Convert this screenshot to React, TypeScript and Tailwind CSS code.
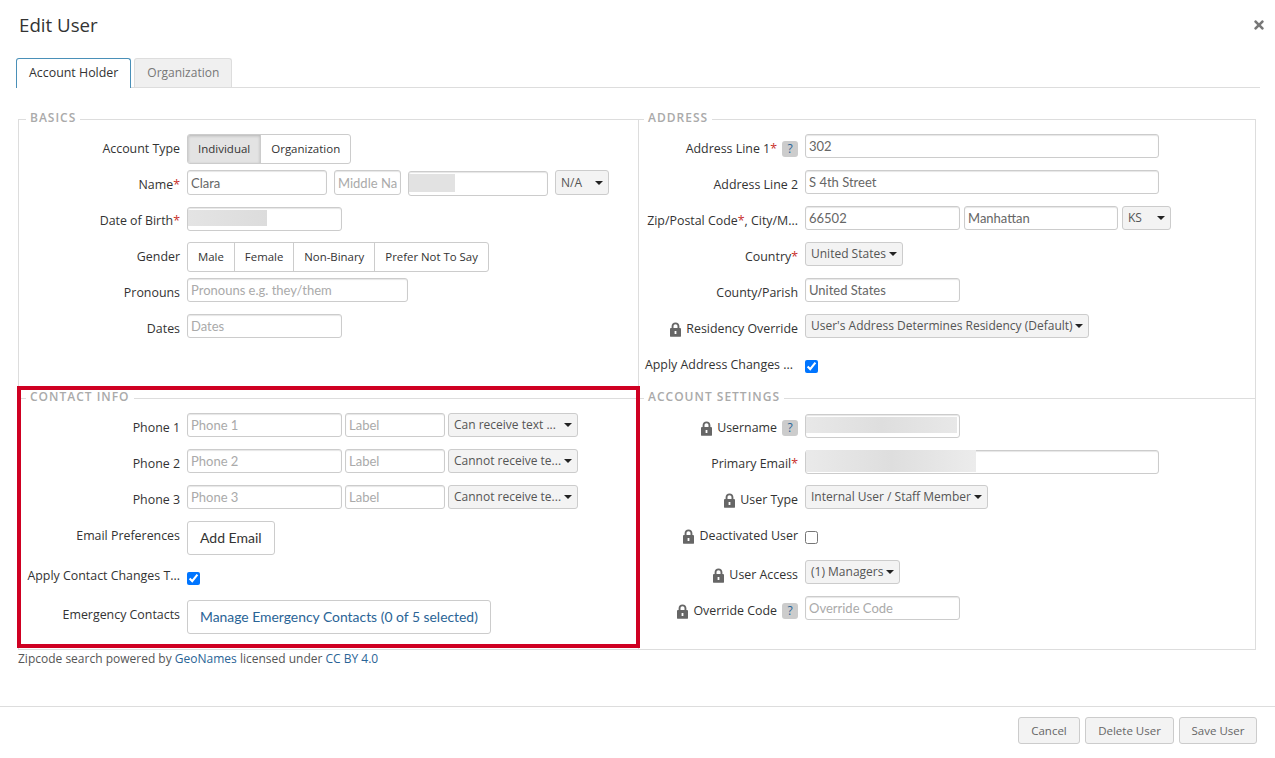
import { ReactNode } from 'react';
import { FaTimes } from 'react-icons/fa';

const inputBase = "h-6 rounded-[3px] border border-[#ccc] bg-white px-[3px] font-['Lato',sans-serif] text-[13px] text-[#666] placeholder:text-[#aaa] shadow-[inset_0_1px_1px_rgba(0,0,0,0.1)] outline-none";
const selectBase = "flex items-center h-6 rounded-[3px] border border-[#ccc] bg-[#f3f3f3] text-xs text-[#555] whitespace-nowrap";

const Caret = () => (
  <svg width="8" height="4" viewBox="0 0 8 4" className="shrink-0">
    <path d="M0 0h8L4 4z" fill="#222" />
  </svg>
);

const Lock = () => (
  <svg width="11" height="15" viewBox="0 0 11 15" className="shrink-0">
    <path
      fillRule="evenodd"
      fill="#666"
      d="M1.6 6V4.2C1.6 1.9 3.2.4 5.500.4s3.900 1.500 3.900 3.800V6h.7c.5 0 .9.4.9.9v7c0 .5-.4.9-.9.9H.9c-.5 0-.9-.4-.9-.9v-7C0 6.400.4 6 .9 6h.7zm1.900 0h4V4.300C7.500 3.100 6.700 2.300 5.500 2.300s-2 .8-2 2V6zM4.600 9v3h1.800V9H4.600z"
    />
  </svg>
);

const Help = () => (
  <span className="inline-flex h-4 w-4 items-center justify-center rounded-[3px] bg-[#ccc] text-xs text-[#2a6496]">?</span>
);

const Req = () => <span className="text-[#c9302c]">*</span>;

const Row = ({ label, children, className = "", right }: { label: ReactNode; children: ReactNode; className?: string; right?: boolean }) => (
  <div className={`flex items-start min-h-9 ${className}`}>
    <div className={`flex shrink-0 items-center justify-end gap-[5px] h-[30px] text-[12.4px] text-[#333] whitespace-nowrap ${right ? 'w-[159px]' : 'w-[161px]'}`}>
      {label}
    </div>
    <div className="ml-[7px] flex items-start gap-[3px]">{children}</div>
  </div>
);

const Seg = ({ items, active, text = "text-[11.5px]" }: { items: string[]; active?: string; text?: string }) => (
  <div className="flex h-[30px] rounded-[3px] border border-[#ccc] bg-white overflow-hidden">
    {items.map((item, i) => (
      <span
        key={item}
        className={`flex items-center px-[10px] text-[#333] ${text} ${i > 0 ? 'border-l border-[#ccc]' : ''} ${item === active ? 'bg-[#e3e3e3] shadow-[inset_0_1px_3px_rgba(0,0,0,0.2)]' : ''}`}
      >
        {item}
      </span>
    ))}
  </div>
);

const Select = ({ value, width }: { value: string; width: string }) => (
  <div className={`${selectBase} ${width} justify-between px-[5px]`}>
    <span>{value}</span>
    <Caret />
  </div>
);

const Blur = ({ className }: { className: string }) => <div className={`absolute ${className}`} />;

const Legend = ({ children, className }: { children: ReactNode; className: string }) => (
  <legend className={`px-1 h-5 text-xs font-semibold uppercase tracking-[1px] leading-[18px] text-[#aaa] ${className}`}>{children}</legend>
);

const Check = ({ checked, className = "mt-[10px]" }: { checked?: boolean; className?: string }) => (
  <input
    type="checkbox"
    defaultChecked={checked}
    className={`h-[13px] w-[13px] accent-[#0075ff] ${className}`}
  />
);

export default function App() {
  return (
    <div className="relative h-[758px] w-full overflow-hidden bg-white font-['Open_Sans',sans-serif]">
      <div className="flex items-center justify-between h-[50px] pl-[19px] pr-[9px]">
        <h1 className="text-[18.7px] text-[#333]">Edit User</h1>
        <FaTimes className="text-[#777] text-sm" />
      </div>

      <div className="mx-4 mt-2 mr-[15px] flex gap-[3px] h-[30px] border-b border-[#ddd]">
        <div className="h-[30px] flex items-center px-3 rounded-t-[3px] border border-b-0 border-[#4a90b8] bg-white text-[12.4px] text-[#333]">Account Holder</div>
        <div className="h-[29px] flex items-center px-3 rounded-t-[3px] border border-b-0 border-[#ddd] bg-[#f0f0f0] text-xs text-[#777]">Organization</div>
      </div>

      <div className="relative ml-[18px] mr-[19px] mt-[21px]">
        <div className="grid grid-cols-[620px_1fr] border-b border-[#ddd]">
          <fieldset className="border-t border-l border-[#ddd] px-0 pt-[5px] h-[279px]">
            <Legend className="ml-[7px]">Basics</Legend>
            <Row label="Account Type">
              <Seg items={["Individual", "Organization"]} active="Individual" />
            </Row>
            <Row label={<span>Name<Req /></span>}>
              <input className={`${inputBase} w-[140px] h-[25px]`} defaultValue="Clara" />
              <input className={`${inputBase} w-[67px] h-[25px] ml-[4px]`} placeholder="Middle Na" />
              <div className="relative ml-[4px]">
                <input className={`${inputBase} w-[140px] h-[25px]`} />
                <Blur className="left-[1px] top-[4px] h-[18px] w-[46px] bg-[#e2e2e2]" />
              </div>
              <Select value="N/A" width="w-[54px] h-[25px] ml-[4px]" />
            </Row>
            <Row label={<span>Date of Birth<Req /></span>}>
              <div className="relative">
                <input className={`${inputBase} w-[155px]`} />
                <Blur className="left-[1px] top-[4px] h-4 w-[79px] bg-gradient-to-r from-[#e4e4e4] to-[#dcdcdc]" />
              </div>
            </Row>
            <Row label="Gender">
              <Seg items={["Male", "Female", "Non-Binary", "Prefer Not To Say"]} text="text-[11.4px]" />
            </Row>
            <Row label="Pronouns">
              <input className={`${inputBase} w-[221px]`} placeholder="Pronouns e.g. they/them" />
            </Row>
            <Row label="Dates">
              <input className={`${inputBase} w-[155px]`} placeholder="Dates" />
            </Row>
          </fieldset>

          {/* runs 10px under the next section so the outer line stays unbroken past its legend */}
          <fieldset className="border-t border-l border-r border-[#ddd] px-0 pt-[5px] h-[289px] -mb-[10px]">
            <Legend className="ml-[5px]">Address</Legend>
            <Row right label={<><span>Address Line 1<Req /></span><Help /></>}>
              <input className={`${inputBase} w-[354px]`} defaultValue="302" />
            </Row>
            <Row right label="Address Line 2">
              <input className={`${inputBase} w-[354px]`} defaultValue="S 4th Street" />
            </Row>
            <Row right label={<span>Zip/Postal Code<Req />, City/M...</span>}>
              <input className={`${inputBase} w-[155px]`} defaultValue="66502" />
              <input className={`${inputBase} w-[154px] ml-[1px]`} defaultValue="Manhattan" />
              <Select value="KS" width="w-[49px] ml-[1px]" />
            </Row>
            <Row right label={<span>Country<Req /></span>}>
              <Select value="United States" width="w-[98px]" />
            </Row>
            <Row right label="County/Parish">
              <input className={`${inputBase} w-[155px]`} defaultValue="United States" />
            </Row>
            <Row right label={<><Lock /><span>Residency Override</span></>}>
              <Select value="User's Address Determines Residency (Default)" width="w-[284px]" />
            </Row>
            <Row right label={<span className="mr-[5px]">Apply Address Changes ...</span>}>
              <Check checked />
            </Row>
          </fieldset>

          <fieldset className="border-t border-l border-[#ddd] px-0 pt-[5px] h-[261px]">
            <Legend className="ml-[7px]">Contact Info</Legend>
            <Row label="Phone 1">
              <input className={`${inputBase} w-[155px]`} placeholder="Phone 1" />
              <input className={`${inputBase} w-[100px]`} placeholder="Label" />
              <Select value="Can receive text ..." width="w-[130px]" />
            </Row>
            <Row label="Phone 2">
              <input className={`${inputBase} w-[155px]`} placeholder="Phone 2" />
              <input className={`${inputBase} w-[100px]`} placeholder="Label" />
              <Select value="Cannot receive te..." width="w-[130px]" />
            </Row>
            <Row label="Phone 3">
              <input className={`${inputBase} w-[155px]`} placeholder="Phone 3" />
              <input className={`${inputBase} w-[100px]`} placeholder="Label" />
              <Select value="Cannot receive te..." width="w-[130px]" />
            </Row>
            <Row label="Email Preferences" className="min-h-[40px]">
              <button className="h-[34px] rounded-[3px] border border-[#ccc] bg-white px-3 font-['Lato',sans-serif] text-sm text-[#333]">Add Email</button>
            </Row>
            <Row label="Apply Contact Changes T..." className="min-h-[39px]">
              <Check checked className="mt-[11px]" />
            </Row>
            <Row label="Emergency Contacts">
              <button className="h-[34px] rounded-[3px] border border-[#ccc] bg-white px-3 font-['Lato',sans-serif] text-[13.9px] text-[#2a6496]">Manage Emergency Contacts (0 of 5 selected)</button>
            </Row>
          </fieldset>

          <fieldset className="border-t border-l border-r border-[#ddd] px-0 pt-[5px] h-[261px]">
            <Legend className="ml-[5px]">Account Settings</Legend>
            <Row right label={<><Lock /><span>Username</span><Help /></>}>
              <div className="relative">
                <input className={`${inputBase} w-[155px]`} />
                <Blur className="left-[1px] top-[4px] h-4 w-[151px] bg-gradient-to-r from-[#e8e8e8] via-[#dedede] to-[#e8e8e8]" />
              </div>
            </Row>
            <Row right label={<span>Primary Email<Req /></span>}>
              <div className="relative">
                <input className={`${inputBase} w-[354px]`} />
                <Blur className="left-[1px] top-[1px] h-[22px] w-[170px] bg-gradient-to-r from-[#eaeaea] via-[#dedede] to-[#ececec]" />
              </div>
            </Row>
            <Row right label={<><Lock /><span>User Type</span></>}>
              <Select value="Internal User / Staff Member" width="w-[183px]" />
            </Row>
            <Row right label={<><Lock /><span>Deactivated User</span></>} className="min-h-[39px]">
              <Check />
            </Row>
            <Row right label={<><Lock /><span>User Access</span></>}>
              <Select value="(1) Managers" width="w-[95px]" />
            </Row>
            <Row right label={<><Lock /><span>Override Code</span><Help /></>}>
              <input className={`${inputBase} w-[155px]`} placeholder="Override Code" />
            </Row>
          </fieldset>
        </div>

        {/* highlight drawn over the contact section */}
        <div className="absolute left-[-1px] top-[277px] h-[262px] w-[623px] border-4 border-[#cf0022] pointer-events-none" />

        <p className="text-xs text-[#555] leading-[18px]">
          Zipcode search powered by <a href="#" className="text-[#2a6496]">GeoNames</a> licensed under <a href="#" className="text-[#2a6496]">CC BY 4.0</a>
        </p>
      </div>

      <div className="mt-[38px] flex justify-end gap-[5px] border-t border-[#ddd] pt-[10px] pr-[18px]">
        <button className="h-[27px] w-[62px] rounded-[3px] border border-[#ccc] bg-[#f3f3f3] text-[11.5px] text-[#666]">Cancel</button>
        <button className="h-[27px] w-[89px] rounded-[3px] border border-[#ccc] bg-[#f3f3f3] text-[11.5px] text-[#666]">Delete User</button>
        <button className="h-[27px] w-[78px] rounded-[3px] border border-[#ccc] bg-[#f3f3f3] text-[11.5px] text-[#666]">Save User</button>
      </div>
    </div>
  );
}
